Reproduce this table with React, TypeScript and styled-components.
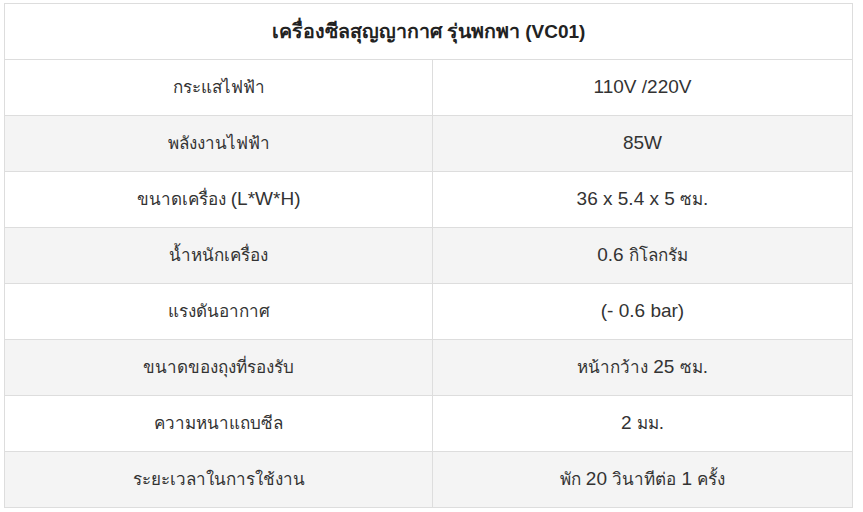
import React from 'react';
import styled, { createGlobalStyle } from 'styled-components';

const GlobalStyle = createGlobalStyle`
  html, body {
    margin: 0;
    padding: 0;
    background: #ffffff;
  }
  body {
    font-family: "Liberation Sans", Arial, "Noto Sans", sans-serif;
    color: #333333;
  }
`;

const Page = styled.div`
  padding: 3px 0 0 4px;
`;

const SpecTable = styled.table`
  width: 848px;
  border-collapse: collapse;
  table-layout: fixed;
  font-size: 19px;
  line-height: 1.2;
  color: #333;
`;

const HeadCell = styled.th`
  height: 55px;
  padding: 0 10px;
  border: 1px solid #dddddd;
  text-align: center;
  font-weight: bold;
  color: #222;
`;

const Row = styled.tr<{ $shaded: boolean }>`
  background: ${(p) => (p.$shaded ? '#f4f4f4' : '#ffffff')};
`;

const Cell = styled.td`
  height: 55px;
  padding: 0 10px;
  border: 1px solid #dddddd;
  text-align: center;
  vertical-align: middle;
`;

// the Thai fallback font runs wider than the original, so Thai runs get their own size
const Thai = styled.span<{ $size: number }>`
  font-size: ${(p) => p.$size}px;
`;

const renderText = (text: string, size = 17) =>
  text.split(/([\u0E00-\u0E7F]+)/).map((part, i) =>
    /[\u0E00-\u0E7F]/.test(part) ? (
      <Thai key={i} $size={size}>
        {part}
      </Thai>
    ) : (
      part
    )
  );

const specs = [
  { label: 'กระแสไฟฟ้า', value: '110V /220V' },
  { label: 'พลังงานไฟฟ้า', value: '85W' },
  { label: 'ขนาดเครื่อง (L*W*H)', value: '36 x 5.4 x 5 ซม.' },
  { label: 'น้ำหนักเครื่อง', value: '0.6 กิโลกรัม' },
  { label: 'แรงดันอากาศ', value: '(- 0.6 bar)' },
  { label: 'ขนาดของถุงที่รองรับ', value: 'หน้ากว้าง 25 ซม.' },
  { label: 'ความหนาแถบซีล', value: '2 มม.' },
  { label: 'ระยะเวลาในการใช้งาน', value: 'พัก 20 วินาทีต่อ 1 ครั้ง' }
];

const App = () => {
  return (
    <>
      <GlobalStyle />
      <Page>
        <SpecTable>
          <colgroup>
            <col style={{ width: '428px' }} />
            <col style={{ width: '420px' }} />
          </colgroup>
          <thead>
            <tr>
              <HeadCell colSpan={2}>
                {renderText('เครื่องซีลสุญญากาศ รุ่นพกพา (VC01)', 19.6)}
              </HeadCell>
            </tr>
          </thead>
          <tbody>
            {specs.map((spec, i) => (
              <Row key={spec.label} $shaded={i % 2 === 1}>
                <Cell>{renderText(spec.label)}</Cell>
                <Cell>{renderText(spec.value)}</Cell>
              </Row>
            ))}
          </tbody>
        </SpecTable>
      </Page>
    </>
  );
};

export default App;
